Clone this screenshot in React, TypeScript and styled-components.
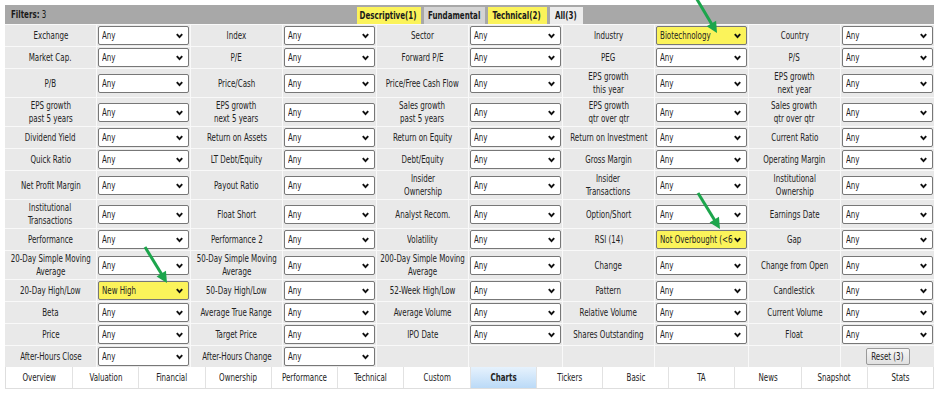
import React from "react";
import styled, { createGlobalStyle } from "styled-components";

const GlobalStyle = createGlobalStyle`
  html, body {
    margin: 0;
    padding: 0;
    background: #ffffff;
  }
  body {
    font-family: "DejaVu Sans Condensed", "DejaVu Sans", Verdana, sans-serif;
    color: #222;
  }
`;

// the reference font is a very narrow Verdana-like face; squeeze the text horizontally
const Squeeze = styled.span<{ $origin?: string }>`
  display: inline-block;
  white-space: pre;
  transform: scaleX(0.79);
  transform-origin: ${(p) => p.$origin || "center"};
`;

const Page = styled.div`
  position: relative;
  width: 939px;
  height: 393px;
  padding: 5px;
  box-sizing: border-box;
  overflow: hidden;
`;

const Header = styled.div`
  display: grid;
  grid-template-columns: 1fr auto 1fr;
  align-items: end;
  height: 19px;
  background: #a8a8a8;
`;

const HeaderTitle = styled.div`
  align-self: center;
  padding-left: 6px;
  font-size: 10px;
  color: #1a1a1a;
  b {
    font-weight: 700;
  }
`;

const Tabs = styled.div`
  display: flex;
  gap: 3px;
  align-items: flex-end;
`;

const Tab = styled.div<{ $tone: "yellow" | "gray" | "light"; $w: number }>`
  width: ${(p) => p.$w}px;
  height: 17px;
  display: flex;
  align-items: center;
  justify-content: center;
  font-size: 10px;
  font-weight: 700;
  color: #1a1a1a;
  background: ${(p) =>
    p.$tone === "yellow" ? "#fbf35a" : p.$tone === "gray" ? "#d4d4d4" : "#ececec"};
`;

const FilterGrid = styled.div`
  display: grid;
  grid-template-columns: repeat(5, 91px 93px);
  gap: 1px;
  background: #f9f9f9;
  padding-top: 1px;
`;

const Label = styled.div`
  display: flex;
  align-items: center;
  justify-content: center;
  text-align: center;
  background: #e9e9e9;
  font-size: 10px;
  line-height: 13px;
  padding: 1px 2px;
  color: #222;
`;

const SelectCell = styled.div`
  display: flex;
  align-items: center;
  justify-content: center;
  background: #e9e9e9;
  padding: 1px 1px;
`;

const SelectBox = styled.div<{ $hot?: boolean }>`
  position: relative;
  display: flex;
  align-items: center;
  width: 100%;
  height: 19px;
  box-sizing: border-box;
  padding: 0 13px 0 3px;
  border: 1px solid #777;
  border-radius: 2px;
  background: ${(p) => (p.$hot ? "#fbf35a" : "#ffffff")};
  font-size: 10px;
  color: #222;
`;

const SelectValue = styled.div`
  flex: 1;
  overflow: hidden;
  white-space: nowrap;
`;

const Chevron = styled.svg`
  position: absolute;
  right: 5px;
  top: 6px;
  width: 7px;
  height: 6px;
  pointer-events: none;
`;

const ResetButton = styled.button`
  width: 44px;
  height: 17px;
  padding: 0;
  border: 1px solid #9a9a9a;
  border-radius: 2px;
  background: linear-gradient(#f6f6f6, #e0e0e0);
  font-family: inherit;
  font-size: 10px;
  color: #222;
`;

const Nav = styled.div`
  display: grid;
  grid-template-columns: repeat(14, 1fr);
  height: 21px;
  border: 1px solid #dedede;
  border-top: none;
  background: #fff;
`;

const NavItem = styled.div<{ $active?: boolean }>`
  display: flex;
  align-items: center;
  justify-content: center;
  font-size: 10px;
  color: #222;
  border-left: 1px solid #e2e2e2;
  font-weight: ${(p) => (p.$active ? 700 : 400)};
  background: ${(p) => (p.$active ? "linear-gradient(#e6f2fd, #bbdaf7)" : "#fff")};
  &:first-child {
    border-left: none;
  }
`;

const Overlay = styled.svg`
  position: absolute;
  left: 0;
  top: 0;
  width: 939px;
  height: 393px;
  pointer-events: none;
`;

type Filter = { label: string; value?: string } | null;

const rows: Filter[][] = [
  [{ label: "Exchange" }, { label: "Index" }, { label: "Sector" }, { label: "Industry", value: "Biotechnology" }, { label: "Country" }],
  [{ label: "Market Cap." }, { label: "P/E" }, { label: "Forward P/E" }, { label: "PEG" }, { label: "P/S" }],
  [{ label: "P/B" }, { label: "Price/Cash" }, { label: "Price/Free Cash Flow" }, { label: "EPS growth\nthis year" }, { label: "EPS growth\nnext year" }],
  [{ label: "EPS growth\npast 5 years" }, { label: "EPS growth\nnext 5 years" }, { label: "Sales growth\npast 5 years" }, { label: "EPS growth\nqtr over qtr" }, { label: "Sales growth\nqtr over qtr" }],
  [{ label: "Dividend Yield" }, { label: "Return on Assets" }, { label: "Return on Equity" }, { label: "Return on Investment" }, { label: "Current Ratio" }],
  [{ label: "Quick Ratio" }, { label: "LT Debt/Equity" }, { label: "Debt/Equity" }, { label: "Gross Margin" }, { label: "Operating Margin" }],
  [{ label: "Net Profit Margin" }, { label: "Payout Ratio" }, { label: "Insider\nOwnership" }, { label: "Insider\nTransactions" }, { label: "Institutional\nOwnership" }],
  [{ label: "Institutional\nTransactions" }, { label: "Float Short" }, { label: "Analyst Recom." }, { label: "Option/Short" }, { label: "Earnings Date" }],
  [{ label: "Performance" }, { label: "Performance 2" }, { label: "Volatility" }, { label: "RSI (14)", value: "Not Overbought (<60)" }, { label: "Gap" }],
  [{ label: "20-Day Simple Moving\nAverage" }, { label: "50-Day Simple Moving\nAverage" }, { label: "200-Day Simple Moving\nAverage" }, { label: "Change" }, { label: "Change from Open" }],
  [{ label: "20-Day High/Low", value: "New High" }, { label: "50-Day High/Low" }, { label: "52-Week High/Low" }, { label: "Pattern" }, { label: "Candlestick" }],
  [{ label: "Beta" }, { label: "Average True Range" }, { label: "Average Volume" }, { label: "Relative Volume" }, { label: "Current Volume" }],
  [{ label: "Price" }, { label: "Target Price" }, { label: "IPO Date" }, { label: "Shares Outstanding" }, { label: "Float" }],
  [{ label: "After-Hours Close" }, { label: "After-Hours Change" }, null, null, null],
];

const navItems = ["Overview", "Valuation", "Financial", "Ownership", "Performance", "Technical", "Custom", "Charts", "Tickers", "Basic", "TA", "News", "Snapshot", "Stats"];

const arrows = [
  { x1: 695, y1: -4, x2: 717, y2: 33 },
  { x1: 698, y1: 193, x2: 720, y2: 229 },
  { x1: 145, y1: 247, x2: 167, y2: 283 },
];

const FilterSelect = ({ value }: { value?: string }) => (
  <SelectBox $hot={!!value} role="combobox">
    <SelectValue>
      <Squeeze $origin="left">{value || "Any"}</Squeeze>
    </SelectValue>
    <Chevron viewBox="0 0 7 6">
      <polyline points="0.8,1.2 3.5,4.2 6.2,1.2" fill="none" stroke="#111" strokeWidth="1.9" />
    </Chevron>
  </SelectBox>
);

const Arrow = ({ x1, y1, x2, y2 }: { x1: number; y1: number; x2: number; y2: number }) => {
  const dx = x2 - x1;
  const dy = y2 - y1;
  const len = Math.sqrt(dx * dx + dy * dy);
  const ux = dx / len;
  const uy = dy / len;
  const head = 11;
  const half = 5.5;
  const bx = x2 - ux * head;
  const by = y2 - uy * head;
  const pts = `${x2},${y2} ${bx - uy * half},${by + ux * half} ${bx + uy * half},${by - ux * half}`;
  return (
    <g>
      <line x1={x1} y1={y1} x2={bx + ux * 2} y2={by + uy * 2} stroke="#1ca54c" strokeWidth="3" />
      <polygon points={pts} fill="#1ca54c" />
    </g>
  );
};

export default function App() {
  return (
    <>
      <GlobalStyle />
      <Page>
        <Header>
          <HeaderTitle>
            <Squeeze $origin="left">
              <b>Filters:</b> 3
            </Squeeze>
          </HeaderTitle>
          <Tabs>
            <Tab $tone="yellow" $w={64}>
              <Squeeze>Descriptive(1)</Squeeze>
            </Tab>
            <Tab $tone="gray" $w={61}>
              <Squeeze>Fundamental</Squeeze>
            </Tab>
            <Tab $tone="yellow" $w={59}>
              <Squeeze>Technical(2)</Squeeze>
            </Tab>
            <Tab $tone="light" $w={33}>
              <Squeeze>All(3)</Squeeze>
            </Tab>
          </Tabs>
          <div />
        </Header>
        <FilterGrid>
          {rows.map((row, ri) =>
            row.map((f, ci) => {
              const last = ri === rows.length - 1;
              if (!f) {
                return (
                  <React.Fragment key={`${ri}-${ci}`}>
                    <Label />
                    {ci === 4 && last ? (
                      <SelectCell>
                        <ResetButton>
                          <Squeeze>Reset (3)</Squeeze>
                        </ResetButton>
                      </SelectCell>
                    ) : (
                      <SelectCell />
                    )}
                  </React.Fragment>
                );
              }
              return (
                <React.Fragment key={`${ri}-${ci}`}>
                  <Label>
                    <Squeeze>{f.label}</Squeeze>
                  </Label>
                  <SelectCell>
                    <FilterSelect value={f.value} />
                  </SelectCell>
                </React.Fragment>
              );
            })
          )}
        </FilterGrid>
        <Nav>
          {navItems.map((n) => (
            <NavItem key={n} $active={n === "Charts"}>
              <Squeeze>{n}</Squeeze>
            </NavItem>
          ))}
        </Nav>
        <Overlay viewBox="0 0 939 393">
          {arrows.map((a, i) => (
            <Arrow key={i} {...a} />
          ))}
        </Overlay>
      </Page>
    </>
  );
}
